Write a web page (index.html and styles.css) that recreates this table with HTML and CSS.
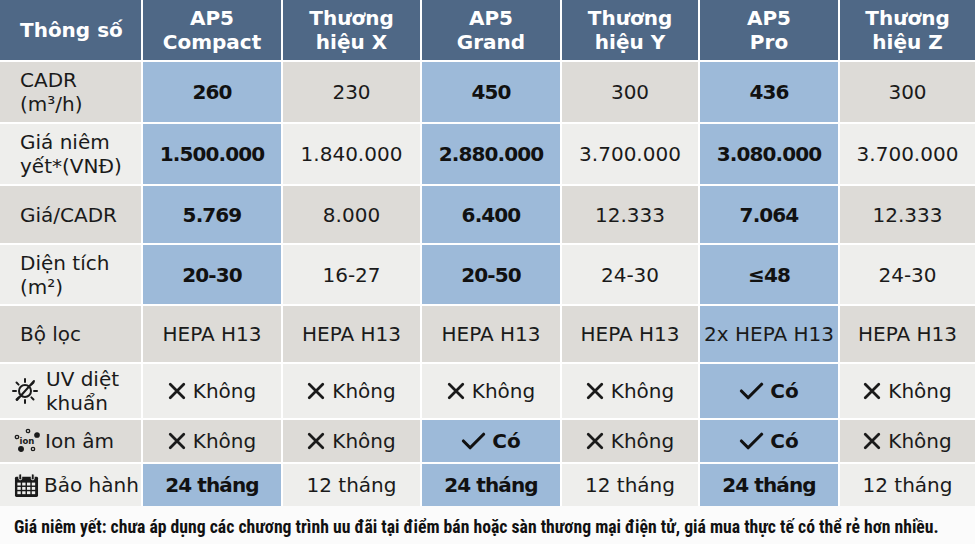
FILE: index.html
```html
<!DOCTYPE html>
<html lang="vi">
<head>
<meta charset="utf-8">
<title>So sánh máy lọc không khí</title>
<link rel="stylesheet" href="styles.css">
</head>
<body>
<div class="table">
  <div class="row head">
    <div class="cell first">Thông số</div>
    <div class="cell">AP5<br>Compact</div>
    <div class="cell">Thương<br>hiệu X</div>
    <div class="cell">AP5<br>Grand</div>
    <div class="cell">Thương<br>hiệu Y</div>
    <div class="cell">AP5<br>Pro</div>
    <div class="cell">Thương<br>hiệu Z</div>
  </div>
  <div class="row dark">
    <div class="cell first">CADR<br>(m³/h)</div>
    <div class="cell hl">260</div>
    <div class="cell">230</div>
    <div class="cell hl">450</div>
    <div class="cell">300</div>
    <div class="cell hl">436</div>
    <div class="cell">300</div>
  </div>
  <div class="row light">
    <div class="cell first">Giá niêm<br>yết*(VNĐ)</div>
    <div class="cell hl">1.500.000</div>
    <div class="cell">1.840.000</div>
    <div class="cell hl">2.880.000</div>
    <div class="cell">3.700.000</div>
    <div class="cell hl">3.080.000</div>
    <div class="cell">3.700.000</div>
  </div>
  <div class="row dark">
    <div class="cell first">Giá/CADR</div>
    <div class="cell hl">5.769</div>
    <div class="cell">8.000</div>
    <div class="cell hl">6.400</div>
    <div class="cell">12.333</div>
    <div class="cell hl">7.064</div>
    <div class="cell">12.333</div>
  </div>
  <div class="row light">
    <div class="cell first">Diện tích<br>(m²)</div>
    <div class="cell hl">20-30</div>
    <div class="cell">16-27</div>
    <div class="cell hl">20-50</div>
    <div class="cell">24-30</div>
    <div class="cell hl">≤48</div>
    <div class="cell">24-30</div>
  </div>
  <div class="row dark">
    <div class="cell first">Bộ lọc</div>
    <div class="cell">HEPA H13</div>
    <div class="cell">HEPA H13</div>
    <div class="cell">HEPA H13</div>
    <div class="cell">HEPA H13</div>
    <div class="cell blue">2x HEPA H13</div>
    <div class="cell">HEPA H13</div>
  </div>
  <div class="row light">
    <div class="cell first icon-cell">
      <svg class="ic uv" viewBox="0 0 26 28" width="26" height="28">
        <g fill="none" stroke="#1a1a1a" stroke-width="2" stroke-linecap="round">
          <circle cx="13" cy="14" r="6"/>
          <line x1="13" y1="2" x2="13" y2="5"/>
          <line x1="13" y1="23" x2="13" y2="26"/>
          <line x1="1" y1="14" x2="4" y2="14"/>
          <line x1="22" y1="14" x2="25" y2="14"/>
          <line x1="4.5" y1="5.5" x2="6.6" y2="7.6"/>
          <line x1="19.4" y1="20.4" x2="21.5" y2="22.5"/>
          <line x1="4.5" y1="22.5" x2="6.6" y2="20.4"/>
          <line x1="19.4" y1="7.6" x2="21.5" y2="5.5"/>
          <line x1="5" y1="23" x2="22" y2="4"/>
        </g>
      </svg>
      <span>UV diệt<br>khuẩn</span>
    </div>
    <div class="cell"><span class="mark"><svg viewBox="0 0 16 16" width="18" height="18"><path d="M2 2 L14 14 M14 2 L2 14" stroke="#1a1a1a" stroke-width="2.5" stroke-linecap="round"/></svg>Không</span></div>
    <div class="cell"><span class="mark"><svg viewBox="0 0 16 16" width="18" height="18"><path d="M2 2 L14 14 M14 2 L2 14" stroke="#1a1a1a" stroke-width="2.5" stroke-linecap="round"/></svg>Không</span></div>
    <div class="cell"><span class="mark"><svg viewBox="0 0 16 16" width="18" height="18"><path d="M2 2 L14 14 M14 2 L2 14" stroke="#1a1a1a" stroke-width="2.5" stroke-linecap="round"/></svg>Không</span></div>
    <div class="cell"><span class="mark"><svg viewBox="0 0 16 16" width="18" height="18"><path d="M2 2 L14 14 M14 2 L2 14" stroke="#1a1a1a" stroke-width="2.5" stroke-linecap="round"/></svg>Không</span></div>
    <div class="cell blue"><span class="mark yes"><svg viewBox="0 0 22 16" width="25" height="18"><path d="M2 8 L8 14 L20 2" fill="none" stroke="#111" stroke-width="2.8" stroke-linecap="round" stroke-linejoin="round"/></svg>Có</span></div>
    <div class="cell"><span class="mark"><svg viewBox="0 0 16 16" width="18" height="18"><path d="M2 2 L14 14 M14 2 L2 14" stroke="#1a1a1a" stroke-width="2.5" stroke-linecap="round"/></svg>Không</span></div>
  </div>
  <div class="row dark short">
    <div class="cell first icon-cell">
      <svg class="ic ion" viewBox="0 0 26 26" width="26" height="26">
        <g fill="none" stroke="#1a1a1a" stroke-width="1.3">
          <circle cx="3" cy="9" r="1.7"/>
          <circle cx="14" cy="3" r="1.7"/>
          <circle cx="23" cy="7" r="2.2" fill="#1a1a1a"/>
          <circle cx="19" cy="21" r="1.7"/>
          <circle cx="7" cy="21" r="2.3" fill="#1a1a1a"/>
        </g>
        <text x="13" y="15.5" text-anchor="middle" class="iontext">ion</text>
      </svg>
      <span>Ion âm</span>
    </div>
    <div class="cell"><span class="mark"><svg viewBox="0 0 16 16" width="18" height="18"><path d="M2 2 L14 14 M14 2 L2 14" stroke="#1a1a1a" stroke-width="2.5" stroke-linecap="round"/></svg>Không</span></div>
    <div class="cell"><span class="mark"><svg viewBox="0 0 16 16" width="18" height="18"><path d="M2 2 L14 14 M14 2 L2 14" stroke="#1a1a1a" stroke-width="2.5" stroke-linecap="round"/></svg>Không</span></div>
    <div class="cell blue"><span class="mark yes"><svg viewBox="0 0 22 16" width="25" height="18"><path d="M2 8 L8 14 L20 2" fill="none" stroke="#111" stroke-width="2.8" stroke-linecap="round" stroke-linejoin="round"/></svg>Có</span></div>
    <div class="cell"><span class="mark"><svg viewBox="0 0 16 16" width="18" height="18"><path d="M2 2 L14 14 M14 2 L2 14" stroke="#1a1a1a" stroke-width="2.5" stroke-linecap="round"/></svg>Không</span></div>
    <div class="cell blue"><span class="mark yes"><svg viewBox="0 0 22 16" width="25" height="18"><path d="M2 8 L8 14 L20 2" fill="none" stroke="#111" stroke-width="2.8" stroke-linecap="round" stroke-linejoin="round"/></svg>Có</span></div>
    <div class="cell"><span class="mark"><svg viewBox="0 0 16 16" width="18" height="18"><path d="M2 2 L14 14 M14 2 L2 14" stroke="#1a1a1a" stroke-width="2.5" stroke-linecap="round"/></svg>Không</span></div>
  </div>
  <div class="row light short">
    <div class="cell first icon-cell">
      <svg class="ic cal" viewBox="0 0 26 26" width="25" height="25">
        <rect x="1" y="4" width="24" height="21" rx="1.5" fill="#1a1a1a"/>
        <rect x="5" y="1" width="3" height="6" rx="1" fill="#1a1a1a" stroke="#eeeeec" stroke-width="1"/>
        <rect x="18" y="1" width="3" height="6" rx="1" fill="#1a1a1a" stroke="#eeeeec" stroke-width="1"/>
        <g fill="#eeeeec">
          <rect x="3.5" y="10" width="3.5" height="3"/><rect x="8.5" y="10" width="3.5" height="3"/><rect x="13.5" y="10" width="3.5" height="3"/><rect x="18.5" y="10" width="3.5" height="3"/>
          <rect x="3.5" y="14.5" width="3.5" height="3"/><rect x="8.5" y="14.5" width="3.5" height="3"/><rect x="13.5" y="14.5" width="3.5" height="3"/><rect x="18.5" y="14.5" width="3.5" height="3"/>
          <rect x="3.5" y="19" width="3.5" height="3"/><rect x="8.5" y="19" width="3.5" height="3"/><rect x="13.5" y="19" width="3.5" height="3"/><rect x="18.5" y="19" width="3.5" height="3"/>
        </g>
      </svg>
      <span>Bảo hành</span>
    </div>
    <div class="cell hl">24 tháng</div>
    <div class="cell">12 tháng</div>
    <div class="cell hl">24 tháng</div>
    <div class="cell">12 tháng</div>
    <div class="cell hl">24 tháng</div>
    <div class="cell">12 tháng</div>
  </div>
</div>
<p class="note">Giá niêm yết: chưa áp dụng các chương trình uu đãi tại điểm bán hoặc sàn thương mại điện tử, giá mua thực tế có thể rẻ hơn nhiều.</p>
</body>
</html>
```
FILE: styles.css
```css
html, body {
  margin: 0;
  padding: 0;
  background: #fbfbfb;
}
body {
  width: 975px;
  height: 544px;
  overflow: hidden;
  font-family: "DejaVu Sans", "Noto Sans", sans-serif;
  color: #1a1a1a;
}
.table {
  display: grid;
  grid-template-columns: 141px 138px 137px 138px 136px 138px 1fr;
  grid-template-rows: 60px 60px 60px 57px 59px 56px 54px 42px 42px;
  gap: 2px;
  background: #ffffff;
}
.row {
  display: contents;
}
.cell {
  display: flex;
  align-items: center;
  justify-content: center;
  text-align: center;
  font-size: 20px;
  line-height: 24px;
  white-space: nowrap;
}
.cell.first {
  justify-content: flex-start;
  text-align: left;
  padding-left: 20px;
}
.head .cell {
  background: #4f6886;
  color: #ffffff;
  font-weight: bold;
  font-size: 20px;
}
.dark .cell {
  background: #dddbd7;
}
.light .cell {
  background: #eeeeec;
}
.row .cell.hl,
.row .cell.blue {
  background: #9dbad9;
}
.cell.hl {
  font-weight: bold;
  letter-spacing: -0.9px;
  color: #111;
}
.icon-cell.first {
  padding-left: 12px;
  gap: 8px;
}
.short .icon-cell.first {
  padding-left: 14px;
  gap: 5px;
}
.ic {
  flex: none;
}
.iontext {
  font-family: "DejaVu Sans", sans-serif;
  font-size: 8.5px;
  font-weight: bold;
  fill: #1a1a1a;
}
.mark {
  display: inline-flex;
  align-items: center;
  gap: 7px;
}
.mark.yes {
  font-weight: bold;
  color: #111;
  gap: 6px;
}
.note {
  margin: 0;
  padding: 11px 0 0 14px;
  font-family: "Liberation Sans Narrow", "Roboto Condensed", "Liberation Sans", sans-serif;
  font-weight: bold;
  font-size: 17.7px;
  line-height: 20px;
  color: #111;
  white-space: nowrap;
}
```
